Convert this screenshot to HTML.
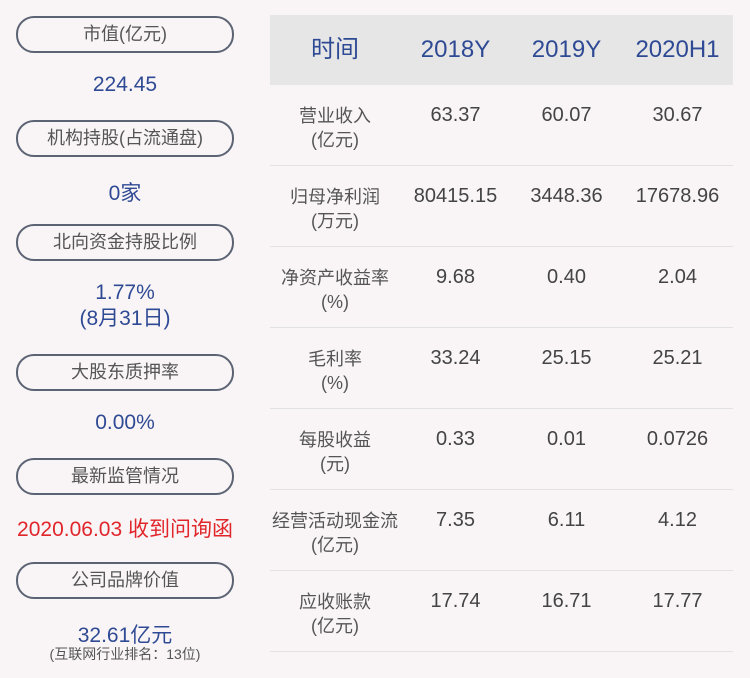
<!DOCTYPE html>
<html><head><meta charset="utf-8"><style>
body{margin:0;width:750px;height:678px;background:#f9f5f6;font-family:"Liberation Sans","Noto Sans CJK SC",sans-serif;position:relative;overflow:hidden}
.pill{position:absolute;left:16px;width:214px;height:33px;border:2px solid #5c6474;border-radius:18px;text-align:center;line-height:33px;font-size:18px;color:#555}
.v{position:absolute;left:0;width:250px;text-align:center;font-size:21px;color:#2f4a94}
.hdr{position:absolute;left:270px;top:15px;width:463px;height:70px;background:#e6e6e6}
.c{position:absolute;text-align:center;}
.h{top:15px;height:70px;line-height:70px;font-size:24px;color:#2f4a94}
.row{position:absolute;left:270px;width:463px;height:80px;border-bottom:1px solid #e2e2e2}
.lab{position:absolute;left:0;width:130px;top:19px;text-align:center;font-size:18px;line-height:24px;color:#555}
.num{position:absolute;top:18px;line-height:24px;font-size:20px;color:#444;text-align:center;width:111px}
</style></head><body>
<div class="pill" style="top:16px">市值(亿元)</div>
<div class="v" style="top:73px">224.45</div>
<div class="pill" style="top:120px">机构持股(占流通盘)</div>
<div class="v" style="top:177px">0家</div>
<div class="pill" style="top:224px">北向资金持股比例</div>
<div class="v" style="top:280px;line-height:26px">1.77%<br>(8月31日)</div>
<div class="pill" style="top:354px">大股东质押率</div>
<div class="v" style="top:411px">0.00%</div>
<div class="pill" style="top:458px">最新监管情况</div>
<div class="v" style="top:513px;color:#e0262b;font-size:21px">2020.06.03 收到问询函</div>
<div class="pill" style="top:562px">公司品牌价值</div>
<div class="v" style="top:619px">32.61亿元</div>
<div class="v" style="top:644px;font-size:14px;color:#555">(互联网行业排名：13位)</div>

<div class="hdr"></div>
<div class="c h" style="left:270px;width:130px">时间</div>
<div class="c h" style="left:400px;width:111px">2018Y</div>
<div class="c h" style="left:511px;width:111px">2019Y</div>
<div class="c h" style="left:622px;width:111px">2020H1</div>

<div class="row" style="top:85px"><div class="lab">营业收入<br>(亿元)</div><div class="num" style="left:130px">63.37</div><div class="num" style="left:241px">60.07</div><div class="num" style="left:352px">30.67</div></div>
<div class="row" style="top:166px"><div class="lab">归母净利润<br>(万元)</div><div class="num" style="left:130px">80415.15</div><div class="num" style="left:241px">3448.36</div><div class="num" style="left:352px">17678.96</div></div>
<div class="row" style="top:247px"><div class="lab">净资产收益率<br>(%)</div><div class="num" style="left:130px">9.68</div><div class="num" style="left:241px">0.40</div><div class="num" style="left:352px">2.04</div></div>
<div class="row" style="top:328px"><div class="lab">毛利率<br>(%)</div><div class="num" style="left:130px">33.24</div><div class="num" style="left:241px">25.15</div><div class="num" style="left:352px">25.21</div></div>
<div class="row" style="top:409px"><div class="lab">每股收益<br>(元)</div><div class="num" style="left:130px">0.33</div><div class="num" style="left:241px">0.01</div><div class="num" style="left:352px">0.0726</div></div>
<div class="row" style="top:490px"><div class="lab">经营活动现金流<br>(亿元)</div><div class="num" style="left:130px">7.35</div><div class="num" style="left:241px">6.11</div><div class="num" style="left:352px">4.12</div></div>
<div class="row" style="top:571px"><div class="lab">应收账款<br>(亿元)</div><div class="num" style="left:130px">17.74</div><div class="num" style="left:241px">16.71</div><div class="num" style="left:352px">17.77</div></div>
</body></html>
